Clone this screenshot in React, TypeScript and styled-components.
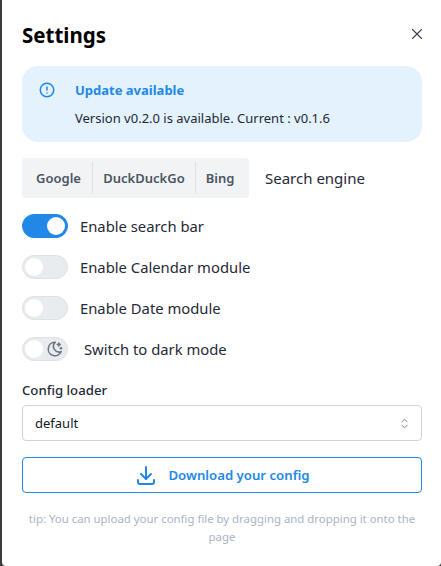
import React from "react";
import styled, { createGlobalStyle } from "styled-components";
import { TbAlertCircle, TbDownload, TbMoonStars, TbX } from "react-icons/tb";

const Global = createGlobalStyle`
  html, body { margin: 0; padding: 0; background: #3b3b3b; }
  body { font-family: "Noto Sans", "Open Sans", sans-serif; width: 441px; height: 566px; overflow: hidden; }
  * { box-sizing: border-box; }
`;

const Panel = styled.div`
  margin-left: 2px;
  width: 439px;
  height: 566px;
  background: #fff;
  border-radius: 0 0 4px 4px;
  padding: 20px 19px 0 20px;
  display: flex;
  flex-direction: column;
`;

const Header = styled.div`
  display: flex;
  align-items: center;
  justify-content: space-between;
  height: 30px;
  margin-bottom: 16px;
`;

const Title = styled.h1`
  margin: 0;
  font-size: 20.5px;
  line-height: 30px;
  font-weight: 700;
  color: #000;
`;

const Close = styled.div`
  display: flex;
  color: #374151;
  margin-top: -2px;
  margin-right: -4px;
`;

const Alert = styled.div`
  height: 76px;
  background: #e3f2fd;
  border-radius: 16px;
  padding: 15px 16px;
  display: flex;
  gap: 17px;
  margin-bottom: 16px;
`;

const AlertIcon = styled.div`
  display: flex;
  color: #2188e8;
  width: 20px;
`;

const AlertBody = styled.div`
  display: flex;
  flex-direction: column;
  gap: 9px;
`;

const AlertTitle = styled.div`
  font-size: 13px;
  line-height: 19px;
  font-weight: 700;
  color: #2188e8;
`;

const AlertText = styled.div`
  font-size: 13px;
  line-height: 18px;
  color: #1f2937;
`;

const EngineRow = styled.div`
  display: flex;
  align-items: center;
  gap: 16px;
  margin-bottom: 16px;
`;

const Segmented = styled.div`
  display: flex;
  height: 40px;
  background: #f1f3f5;
  border-radius: 4px;
  padding: 4px 0;
`;

const Segment = styled.div<{ $w: number; $line?: boolean; $pl?: number; $pr?: number }>`
  width: ${(p) => p.$w}px;
  display: flex;
  align-items: center;
  justify-content: center;
  padding: 0 ${(p) => p.$pr ?? 0}px 0 ${(p) => p.$pl ?? 0}px;
  font-size: 13px;
  font-weight: 600;
  color: #4b5563;
  border-left: ${(p) => (p.$line ? "1px solid #dee2e6" : "none")};
`;

const EngineLabel = styled.span`
  font-size: 15px;
  color: #1f2937;
`;

const Rows = styled.div`
  display: flex;
  flex-direction: column;
  gap: 17px;
  margin-bottom: 20px;
`;

const Row = styled.div`
  display: flex;
  align-items: center;
  height: 24px;
  gap: 12px;
`;

const Track = styled.div<{ $on?: boolean }>`
  position: relative;
  width: 46px;
  height: 24px;
  border-radius: 12px;
  background: ${(p) => (p.$on ? "#2188e8" : "#e9ecef")};
  border: 1px solid ${(p) => (p.$on ? "#2188e8" : "#dee2e6")};
  color: #6b7280;
  display: flex;
  align-items: center;
  justify-content: flex-end;
  padding-right: 3px;
`;

const Thumb = styled.div<{ $on?: boolean }>`
  position: absolute;
  top: 2px;
  left: ${(p) => (p.$on ? "24px" : "2px")};
  width: 18px;
  height: 18px;
  border-radius: 50%;
  background: #fff;
`;

const RowLabel = styled.span<{ $gap?: number }>`
  font-size: 14.8px;
  line-height: 22px;
  margin-top: -1px;
  color: #1f2937;
  margin-left: ${(p) => p.$gap ?? 0}px;
`;

const FieldLabel = styled.div`
  font-size: 13.2px;
  line-height: 18px;
  font-weight: 500;
  color: #1f2937;
  margin-bottom: 6px;
`;

const Select = styled.div`
  height: 36px;
  border: 1px solid #ced4da;
  border-radius: 4px;
  padding: 0 12px;
  display: flex;
  align-items: center;
  justify-content: space-between;
  font-size: 13px;
  color: #111827;
  margin-bottom: 16px;
`;

const Chevrons = styled.svg`
  display: block;
  margin-right: -3px;
`;

const Button = styled.div`
  height: 36px;
  border: 1px solid #2188e8;
  border-radius: 4px;
  display: flex;
  align-items: center;
  justify-content: center;
  gap: 10px;
  color: #2188e8;
  font-size: 13.2px;
  font-weight: 600;
  margin-bottom: 17px;
`;

const Tip = styled.div`
  font-size: 11.4px;
  line-height: 18px;
  color: #a9b4c6;
  text-align: center;
`;

export default function App() {
  return (
    <>
      <Global />
      <Panel>
        <Header>
          <Title>Settings</Title>
          <Close>
            <TbX size={18} strokeWidth={1.5} />
          </Close>
        </Header>
        <Alert>
          <AlertIcon>
            <TbAlertCircle size={18} />
          </AlertIcon>
          <AlertBody>
            <AlertTitle>Update available</AlertTitle>
            <AlertText>Version v0.2.0 is available. Current : v0.1.6</AlertText>
          </AlertBody>
        </Alert>
        <EngineRow>
          <Segmented>
            <Segment $w={70} $pl={3}>Google</Segment>
            <Segment $w={103} $line>DuckDuckGo</Segment>
            <Segment $w={54} $line $pr={5}>Bing</Segment>
          </Segmented>
          <EngineLabel>Search engine</EngineLabel>
        </EngineRow>
        <Rows>
          <Row>
            <Track $on><Thumb $on /></Track>
            <RowLabel>Enable search bar</RowLabel>
          </Row>
          <Row>
            <Track><Thumb /></Track>
            <RowLabel>Enable Calendar module</RowLabel>
          </Row>
          <Row>
            <Track><Thumb /></Track>
            <RowLabel>Enable Date module</RowLabel>
          </Row>
          <Row>
            <Track><Thumb /><TbMoonStars size={18} /></Track>
            <RowLabel $gap={4}>Switch to dark mode</RowLabel>
          </Row>
        </Rows>
        <FieldLabel>Config loader</FieldLabel>
        <Select>
          default
          <Chevrons width="15" height="15" viewBox="0 0 15 15" fill="none">
            <path
              d="M4.9 5.8 7.5 3.2l2.6 2.6M4.9 9.2l2.6 2.6 2.6-2.6"
              stroke="#6b7280"
              strokeWidth="0.9"
              strokeLinecap="round"
              strokeLinejoin="round"
            />
          </Chevrons>
        </Select>
        <Button>
          <TbDownload size={24} />
          Download your config
        </Button>
        <Tip>tip: You can upload your config file by dragging and dropping it onto the page</Tip>
      </Panel>
    </>
  );
}
